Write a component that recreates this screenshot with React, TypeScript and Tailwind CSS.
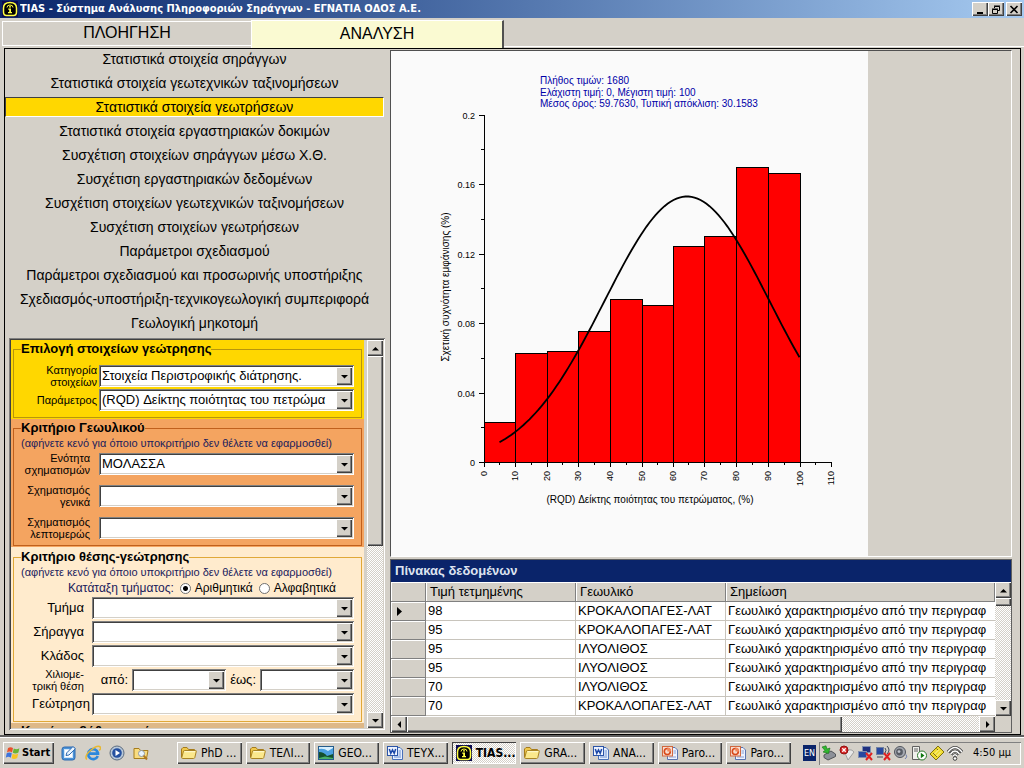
import React, { useState } from "react";

const raised =
  "bg-[#d4d0c8] shadow-[inset_1px_1px_0_#ffffff,inset_-1px_-1px_0_#404040,inset_-2px_-2px_0_#808080]";
const sunken =
  "bg-white shadow-[inset_1px_1px_0_#808080,inset_-1px_-1px_0_#ffffff,inset_2px_2px_0_#404040,inset_-2px_-2px_0_#d4d0c8]";
const dither =
  "bg-[repeating-conic-gradient(#ffffff_0_25%,#d4d0c8_0_50%)] bg-[length:2px_2px]";

const menuItems = [
  "Στατιστικά στοιχεία σηράγγων",
  "Στατιστικά στοιχεία γεωτεχνικών ταξινομήσεων",
  "Στατιστικά στοιχεία γεωτρήσεων",
  "Στατιστικά στοιχεία εργαστηριακών δοκιμών",
  "Συσχέτιση στοιχείων σηράγγων μέσω Χ.Θ.",
  "Συσχέτιση εργαστηριακών δεδομένων",
  "Συσχέτιση στοιχείων γεωτεχνικών ταξινομήσεων",
  "Συσχέτιση στοιχείων γεωτρήσεων",
  "Παράμετροι σχεδιασμού",
  "Παράμετροι σχεδιασμού και προσωρινής υποστήριξης",
  "Σχεδιασμός-υποστήριξη-τεχνικογεωλογική συμπεριφορά",
  "Γεωλογική μηκοτομή",
];

const NOTE = "(αφήνετε κενό για όποιο υποκριτήριο δεν θέλετε να εφαρμοσθεί)";

const conglomerate = "ΚΡΟΚΑΛΟΠΑΓΕΣ-ΛΑΤ";
const siltstone = "ΙΛΥΟΛΙΘΟΣ";
const rows: [string, string][] = [
  ["98", conglomerate],
  ["95", conglomerate],
  ["95", siltstone],
  ["95", siltstone],
  ["70", siltstone],
  ["70", conglomerate],
];

type Direction = "up" | "down" | "left" | "right";
const arrowPoints: Record<Direction, string> = {
  up: "0,5.5 3.5,2 7,5.5",
  down: "0,2 7,2 3.5,5.5",
  left: "5,0 5,7 1.5,3.5",
  right: "2,0 2,7 5.5,3.5",
};

function Arrow({ dir }: { dir: Direction }) {
  return (
    <svg width="7" height="7" viewBox="0 0 7 7" aria-hidden="true">
      <polygon points={arrowPoints[dir]} fill="#000" />
    </svg>
  );
}

function ScrollButton({ dir, label }: { dir: Direction; label: string }) {
  return (
    <button
      type="button"
      aria-label={label}
      className={`flex h-4 w-4 shrink-0 items-center justify-center ${raised}`}
    >
      <Arrow dir={dir} />
    </button>
  );
}

function Combo({ id, value = "", className = "" }: { id: string; value?: string; className?: string }) {
  return (
    <div className={`grid h-[22px] min-w-0 ${sunken} ${className}`}>
      <select
        id={id}
        defaultValue={value}
        className="col-start-1 row-start-1 h-[22px] w-full min-w-0 appearance-none overflow-hidden bg-transparent pr-5 pl-[3px] text-[13px] leading-[22px] text-black outline-none"
      >
        <option value={value}>{value}</option>
      </select>
      <span
        className={`pointer-events-none col-start-1 row-start-1 my-0.5 mr-0.5 flex w-4 items-center justify-center justify-self-end ${raised}`}
      >
        <Arrow dir="down" />
      </span>
    </div>
  );
}

function Group({
  title,
  tone,
  line,
  children,
}: {
  title: string;
  tone: string;
  line: string;
  children?: React.ReactNode;
}) {
  return (
    <div className={`px-0.5 pb-px ${tone}`}>
      <fieldset className={`min-w-0 border pr-[7px] pb-1.5 ${line}`}>
        <legend className="ml-[7px] text-[13px] leading-[14px] font-bold">{title}</legend>
        {children}
      </fieldset>
    </div>
  );
}

function Field({
  id,
  label,
  value,
  labelClass,
}: {
  id: string;
  label: string[];
  value?: string;
  labelClass: string;
}) {
  return (
    <div className="flex h-[22px] items-center">
      <label htmlFor={id} className={`shrink-0 text-right ${labelClass}`}>
        {label.map((part) => (
          <span key={part} className="block whitespace-nowrap">
            {part}
          </span>
        ))}
      </label>
      <Combo id={id} value={value} className="flex-1" />
    </div>
  );
}

const edges = [484, 515, 547, 578, 610, 642, 673, 704, 736, 768, 800];
const tops = [422, 353, 351, 331, 299, 305, 246, 236, 167, 173];
const xTicks = [484, 515, 547, 578, 610, 642, 673, 704, 736, 768, 800, 831];
const yTicks: [number, string][] = [
  [115, "0.2"],
  [184, "0.16"],
  [254, "0.12"],
  [323, "0.08"],
  [393, "0.04"],
  [462, "0"],
];
const curve = Array.from({ length: 101 }, (_, i) => {
  const x = 499.5 + i * 3;
  const y = 462.5 - 266 * Math.exp(-((x - 687) ** 2) / (2 * 82.6 ** 2));
  return `${x},${y.toFixed(1)}`;
}).join(" ");

function Histogram() {
  return (
    <svg
      width="477"
      height="505"
      viewBox="391 51 477 505"
      className="shrink-0 bg-[#fafafa] font-['Liberation_Sans',sans-serif]"
      role="img"
      aria-label="Ιστόγραμμα"
    >
      <g fill="#0000a8" fontSize="10">
        <text x="540" y="84">Πλήθος τιμών: 1680</text>
        <text x="540" y="96">Ελάχιστη τιμή: 0, Μέγιστη τιμή: 100</text>
        <text x="540" y="107">Μέσος όρος: 59.7630, Τυπική απόκλιση: 30.1583</text>
      </g>
      <g shapeRendering="crispEdges" stroke="#000">
        {tops.map((top, i) => (
          <rect
            key={edges[i]}
            x={edges[i] + 0.5}
            y={top + 0.5}
            width={edges[i + 1] - edges[i]}
            height={462 - top}
            fill="#ff0000"
          />
        ))}
        <path d="M484.5 115V467M479 462.5H832" fill="none" />
        {yTicks.map(([y]) => (
          <path key={y} d={`M479 ${y + 0.5}H485`} />
        ))}
        {yTicks.slice(1).map(([y]) => (
          <path key={y} d={`M481 ${y - 34.5}H485`} />
        ))}
        {xTicks.map((x) => (
          <path key={x} d={`M${x + 0.5} 462V467`} />
        ))}
        {xTicks.slice(1).map((x) => (
          <path key={x} d={`M${x - 15.5} 462V465`} />
        ))}
      </g>
      <polyline points={curve} fill="none" stroke="#000" strokeWidth="1.8" />
      <g fontSize="9" fill="#000">
        {yTicks.map(([y, label]) => (
          <text key={y} x="475" y={y + 4} textAnchor="end">
            {label}
          </text>
        ))}
        {xTicks.map((x, i) => (
          <text key={x} transform={`translate(${x + 3} 471) rotate(-90)`} textAnchor="end">
            {i * 10}
          </text>
        ))}
      </g>
      <g fontSize="10" fill="#000" textAnchor="middle">
        <text x="650" y="503">(RQD) Δείκτης ποιότητας του πετρώματος, (%)</text>
        <text transform="translate(449 287) rotate(-90)">Σχετική συχνότητα εμφάνισης (%)</text>
      </g>
    </svg>
  );
}

function TiasIcon() {
  return (
    <svg width="16" height="16" viewBox="0 0 16 16" aria-hidden="true">
      <rect width="16" height="16" fill="#0a0a50" />
      <path d="M4.5 14.5H11.5Q14.5 14.5 14.5 11V7Q14.5 1.5 8 1.5T1.5 7V11Q1.5 14.5 4.5 14.5Z" fill="#000" stroke="#ffff40" strokeWidth="1.5" />
      <path d="M5 6.5Q5 4 8 4T11 6.5" fill="none" stroke="#ffff40" />
      <path d="M7 5.2H9V6.6H7zM6.2 7.6H9V11H10V12.2H6V11H7.2V8.8H6.2z" fill="#ffff40" />
    </svg>
  );
}

function FolderIcon() {
  return (
    <svg width="16" height="16" viewBox="0 0 16 16" aria-hidden="true">
      <path d="M.5 12.5V4L2 2.5H6L7.5 4.5H13.5V7" fill="#f0c84c" stroke="#a67c1c" />
      <path d="M.8 12.5L2.5 6Q2.7 5.5 3.5 5.5H14.5Q15.5 5.5 15.3 6.3L13.8 12.6Q13.5 13.5 12.5 13.5H1.6Q.6 13.5 .8 12.5Z" fill="#fbe88c" stroke="#a98424" />
      <path d="M3.6 6.7H14" stroke="#fffbd8" />
    </svg>
  );
}

function WordIcon() {
  return (
    <svg width="16" height="16" viewBox="0 0 16 16" aria-hidden="true">
      <path d="M5.5 2.5H13L15.5 5V14.5H5.5Z" fill="#e6efff" stroke="#4870b8" />
      <path d="M11.5 6H14M11.5 8H14M11.5 10H14M7 12H14" stroke="#6a8fd0" />
      <rect x=".5" y="1.5" width="10" height="9" fill="#eef4ff" stroke="#2c55a8" />
      <path d="M2.3 4L3.8 8.3L5.5 5L7.2 8.3L8.7 4" fill="none" stroke="#1c48a8" strokeWidth="1.5" />
    </svg>
  );
}

function SlidesIcon() {
  return (
    <svg width="16" height="16" viewBox="0 0 16 16" aria-hidden="true">
      <path d="M5.5 2.5H13L15.5 5V14.5H5.5Z" fill="#edf2ff" stroke="#5a74b0" />
      <path d="M11.5 6H14M11.5 8H14M7 12H14" stroke="#8aa0d0" />
      <rect x=".5" y="1.5" width="10" height="9.5" fill="#f8ddd0" stroke="#d06840" />
      <circle cx="5.3" cy="6.5" r="3" fill="none" stroke="#d84818" strokeWidth="1.6" />
      <path d="M5.3 6.5V2.6Q9 2.8 9.2 6.5Z" fill="#f0885c" />
    </svg>
  );
}

function ImageIcon() {
  return (
    <svg width="16" height="16" viewBox="0 0 16 16" aria-hidden="true">
      <rect x=".5" y="1.5" width="15" height="13" fill="#4aa0e0" stroke="#245c8c" />
      <path d="M1 4Q6 3 10 6L15 3V2H1Z" fill="#d8f0ff" />
      <path d="M1 14V7Q6 7 9 11L15 9V14Z" fill="#14502c" />
      <path d="M1 13L7 11.5L15 13V14H1Z" fill="#48b068" />
    </svg>
  );
}

function WindowsFlag() {
  return (
    <svg width="16" height="16" viewBox="0 0 16 16" aria-hidden="true">
      <path d="M3 3Q5.5 1.3 8 3L7 7.4Q4.5 5.8 2 7.4Z" fill="#e8502c" />
      <path d="M8.8 3.4Q11.5 5 14.4 3.2L13.4 7.6Q10.5 9.4 7.8 7.8Z" fill="#68b434" />
      <path d="M1.7 8.2Q4.3 6.7 6.8 8.2L5.8 12.7Q3.3 11 .8 12.7Z" fill="#3c74dc" />
      <path d="M7.6 8.7Q10.3 10.2 13.2 8.4L12.2 13Q9.2 14.8 6.6 13.2Z" fill="#f8c424" />
    </svg>
  );
}

const quickIcons: { name: string; art: React.ReactNode }[] = [
  {
    name: "Επιφάνεια εργασίας",
    art: (
      <>
        <rect x="1" y="2" width="13" height="13" rx="2.5" fill="#4c94d8" stroke="#2c68b0" />
        <rect x="3.5" y="4.5" width="8" height="8" fill="#fff" stroke="#d0e4f8" />
        <path d="M5 10.5L5.8 7.8L12 1.5L14.3 3.8L8 10Z" fill="#e8f4ff" stroke="#2c68b0" />
      </>
    ),
  },
  {
    name: "Internet Explorer",
    art: (
      <>
        <path d="M12.8 11A5 5 0 1 1 13 7.8V8.6H4" fill="none" stroke="#2c88dc" strokeWidth="2.6" />
        <path d="M1.8 14.5Q-1 11 5.5 5.5T14.5 1.5T14 5.5" fill="none" stroke="#e8b830" strokeWidth="1.5" />
      </>
    ),
  },
  {
    name: "Media Player",
    art: (
      <>
        <circle cx="8" cy="8" r="7" fill="#b8c8d8" stroke="#5c6c80" />
        <circle cx="8" cy="8" r="4.8" fill="#2450a0" />
        <path d="M6.5 5L11 8L6.5 11Z" fill="#fff" />
      </>
    ),
  },
  {
    name: "Αναζήτηση",
    art: (
      <>
        <path d="M1 13.5V3.5H6L7.5 5.5H15L13.5 13.5Z" fill="#f8dc80" stroke="#a67c1c" />
        <circle cx="8.5" cy="8.5" r="3" fill="#e8f4ff" stroke="#9098a0" />
        <path d="M10.7 10.7L14 14.5" stroke="#b07820" strokeWidth="2" />
      </>
    ),
  },
];

const redCross = <path d="M9 8L15 15M15 8L9 15" stroke="#e02020" strokeWidth="2" />;
const trayIcons: { name: string; art: React.ReactNode }[] = [
  {
    name: "Ασφαλής κατάργηση",
    art: (
      <>
        <path d="M3 10L10 6L14.5 9V11.5L7 15L3 12.5Z" fill="#8c9098" stroke="#505458" />
        <path d="M1 2L5 .8L6 4L9 3L7.5 8.5L2 7L4 5.5Z" fill="#30b830" stroke="#187018" strokeWidth=".6" />
      </>
    ),
  },
  {
    name: "Αποσυνδεδεμένο",
    art: (
      <>
        <path d="M6 8Q11 2 15 7L9 15Z" fill="#e8e8e8" stroke="#a0a0a0" />
        <circle cx="5" cy="5" r="4" fill="#d82828" stroke="#901010" />
        <path d="M3.3 3.3L6.7 6.7M6.7 3.3L3.3 6.7" stroke="#fff" strokeWidth="1.3" />
      </>
    ),
  },
  {
    name: "Δίκτυο",
    art: (
      <>
        <rect x="5.5" y="1.5" width="8" height="6" fill="#203080" stroke="#8090b0" />
        <rect x="1.5" y="6.5" width="8" height="6" fill="#2848a0" stroke="#8090b0" />
        {redCross}
      </>
    ),
  },
  {
    name: "Ασύρματο δίκτυο",
    art: (
      <>
        <rect x="1.5" y="2.5" width="7" height="7" fill="#2848a0" stroke="#7080a0" />
        <path d="M2 12H8M10 3Q12 5 10 8M12 1Q16 5 12 9" fill="none" stroke="#404858" />
        {redCross}
      </>
    ),
  },
  {
    name: "Ένταση",
    art: (
      <>
        <circle cx="7" cy="7" r="5.5" fill="#a4a8b0" stroke="#50545c" />
        <circle cx="6.5" cy="7" r="3.4" fill="#585c64" />
        <circle cx="6" cy="6.6" r="1.4" fill="#c0c4cc" />
        <path d="M13 9.5Q15 12 12 14" fill="none" stroke="#7080b0" />
      </>
    ),
  },
  {
    name: "Διακομιστής",
    art: (
      <>
        <path d="M1.5 1.5H8.5V14.5H1.5ZM3 4H7M3 6H7" fill="#f0f0ec" stroke="#606060" />
        <circle cx="11" cy="10.5" r="4.5" fill="#fff" stroke="#287828" />
        <path d="M9.8 7.8L13.5 10.5L9.8 13.2Z" fill="#107810" />
      </>
    ),
  },
  {
    name: "Γλώσσα",
    art: (
      <>
        <path d="M1 9L9 1L15 7L7 15Z" fill="#f0dc30" stroke="#807010" />
        <path d="M5 9.5L10 4.5M7 11.5L12 6.5" stroke="#fff8a0" />
        <path d="M4 8L8 12M7.5 3.5L9 5" stroke="#806c18" />
      </>
    ),
  },
  {
    name: "Ασύρματη σύνδεση",
    art: (
      <>
        <path d="M1 7Q8 -2 15 7M3.5 9Q8 3 12.5 9M6 11Q8 8.5 10 11" fill="none" stroke="#404040" strokeWidth="3" />
        <path d="M1 7Q8 -2 15 7M3.5 9Q8 3 12.5 9M6 11Q8 8.5 10 11" fill="none" stroke="#fff" strokeWidth="1.4" />
        <circle cx="8" cy="13.5" r="1.8" fill="#fff" stroke="#404040" />
      </>
    ),
  },
];

const tasks: { label: string; icon: React.ReactNode; active?: boolean }[] = [
  { label: "PhD ...", icon: <FolderIcon /> },
  { label: "ΤΕΛΙ...", icon: <FolderIcon /> },
  { label: "GEO...", icon: <ImageIcon /> },
  { label: "ΤΕΥΧ...", icon: <WordIcon /> },
  { label: "TIAS...", icon: <TiasIcon />, active: true },
  { label: "GRA...", icon: <FolderIcon /> },
  { label: "ANA...", icon: <WordIcon /> },
  { label: "Paro...", icon: <SlidesIcon /> },
  { label: "Paro...", icon: <SlidesIcon /> },
];

function TitleBar() {
  const control = `flex h-[14px] w-4 items-center justify-center ${raised}`;
  return (
    <header className="flex h-[18px] shrink-0 items-center bg-linear-to-r from-[#0a246a] to-[#a6caf0] pr-0.5 pl-0.5">
      <TiasIcon />
      <h1 className="ml-0.5 flex-1 truncate font-['DejaVu_Sans_Condensed','DejaVu_Sans',sans-serif] text-[11px] leading-4 font-bold text-white">
        TIAS - Σύστημα Ανάλυσης Πληροφοριών Σηράγγων - ΕΓΝΑΤΙΑ ΟΔΟΣ Α.Ε.
      </h1>
      <button type="button" aria-label="Ελαχιστοποίηση" className={control}>
        <svg width="10" height="9" viewBox="0 0 10 9"><path d="M2 7H8V9H2Z" /></svg>
      </button>
      <button type="button" aria-label="Επαναφορά" className={control}>
        <svg width="10" height="9" viewBox="0 0 10 9" fill="none" stroke="#000">
          <path d="M3.5 3V1.5H8.5V5.5H7M3 1H9M1.5 4.5H6.5V8.5H1.5ZM1 4H7" />
        </svg>
      </button>
      <button type="button" aria-label="Κλείσιμο" className={`ml-0.5 ${control}`}>
        <svg width="10" height="9" viewBox="0 0 10 9"><path d="M1.5 1L8.5 8M8.5 1L1.5 8" stroke="#000" strokeWidth="1.6" /></svg>
      </button>
    </header>
  );
}

function Filters() {
  const top = "w-[85px] pr-0.5 text-[11px] leading-3";
  const narrow = "w-[85px] pr-[9px] text-[11px] leading-3";
  const wide = "w-[78px] pr-2 text-[13px] leading-4";
  const note = "pt-px pl-[7px] text-[11px] leading-[14px] whitespace-nowrap text-[#20205c]";
  const radio = "h-[11px] w-[11px] appearance-none rounded-full border border-[#707070] bg-white";
  return (
    <div className="flex min-h-0 flex-1 gap-[3px] p-0.5 shadow-[inset_1px_1px_0_#808080,inset_-1px_-1px_0_#ffffff,inset_2px_2px_0_#404040]">
      <form className="min-w-0 flex-1 overflow-hidden">
        <Group title="Επιλογή στοιχείων γεώτρησης" tone="bg-[#ffd700] pt-0.5" line="border-[#b8960c]">
          <div className="flex flex-col gap-0.5 pt-[9px]">
            <Field id="category" label={["Κατηγορία", "στοιχείων"]} value="Στοιχεία Περιστροφικής διάτρησης." labelClass={top} />
            <Field id="parameter" label={["Παράμετρος"]} value="(RQD) Δείκτης ποιότητας του πετρώμα" labelClass={top} />
          </div>
        </Group>
        <Group title="Κριτήριο Γεωυλικού" tone="bg-[#f4a460] pt-0.5" line="border-[#c0601c]">
          <p className={note}>{NOTE}</p>
          <div className="flex flex-col gap-2.5 pt-[3px]">
            <Field id="unit" label={["Ενότητα", "σχηματισμών"]} value="ΜΟΛΑΣΣΑ" labelClass={narrow} />
            <Field id="formation" label={["Σχηματισμός", "γενικά"]} labelClass={narrow} />
            <Field id="formation-detail" label={["Σχηματισμός", "λεπτομερώς"]} labelClass={narrow} />
          </div>
        </Group>
        <Group title="Κριτήριο θέσης-γεώτρησης" tone="bg-[#ffebcd] pt-[3px]" line="border-[#e0a838]">
          <p className={note}>{NOTE}</p>
          <div className="flex h-[18px] items-center justify-end gap-1.5 pr-[18px] text-xs">
            <span className="text-[#20205c]">Κατάταξη τμήματος:</span>
            <label className="flex items-center gap-1">
              <input type="radio" name="order" defaultChecked className={`bg-[radial-gradient(circle,#000_0_2px,#fff_3px)] ${radio}`} />
              Αριθμητικά
            </label>
            <label className="flex items-center gap-1">
              <input type="radio" name="order" className={radio} />
              Αλφαβητικά
            </label>
          </div>
          <div className="flex flex-col gap-0.5">
            <Field id="section" label={["Τμήμα"]} labelClass={wide} />
            <Field id="tunnel" label={["Σήραγγα"]} labelClass={wide} />
            <Field id="branch" label={["Κλάδος"]} labelClass={wide} />
            <div className="flex h-[22px] items-center text-[13px]">
              <span className="w-[78px] shrink-0 pr-2 text-right text-[11px] leading-3">
                Χιλιομε-
                <br />
                τρική θέση
              </span>
              <label htmlFor="from" className="w-10 shrink-0 pr-1 text-right">από:</label>
              <Combo id="from" className="flex-1" />
              <label htmlFor="to" className="w-[34px] shrink-0 pr-1 text-right">έως:</label>
              <Combo id="to" className="flex-1" />
            </div>
            <Field id="borehole" label={["Γεώτρηση"]} labelClass="w-[78px] pr-0.5 text-[13px] leading-4" />
          </div>
        </Group>
        <Group title="Κριτήριο βάθους γεώτρησης" tone="bg-[#deb887] pt-px" line="border-[#a07840]" />
      </form>
      <div className={`flex w-4 shrink-0 flex-col ${dither}`}>
        <ScrollButton dir="up" label="Κύλιση φίλτρων προς τα πάνω" />
        <div className={`h-[49%] ${raised}`} />
        <div className="flex-1" />
        <ScrollButton dir="down" label="Κύλιση φίλτρων προς τα κάτω" />
      </div>
    </div>
  );
}

function DataTable() {
  const head = "h-5 border-b border-[#808080] p-0 text-left font-normal shadow-[inset_1px_1px_0_#ffffff,inset_-1px_0_0_#808080] bg-[#d4d0c8]";
  const cell = "h-[19px] truncate border-r border-b border-[#c8c4bc] p-0 pl-0.5";
  return (
    <section className="flex shrink-0 flex-col border border-[#606060]">
      <h2 className="bg-[#0a246a] pl-1 text-[13px] leading-[22px] font-bold text-[#dde3f0]">Πίνακας δεδομένων</h2>
      <div className="flex">
        <table className="min-w-0 flex-1 table-fixed border-separate border-spacing-0 bg-white text-[13px] leading-[18px]">
          <colgroup>
            <col className="w-[35px]" />
            <col className="w-[150px]" />
            <col className="w-[150px]" />
            <col />
          </colgroup>
          <thead>
            <tr>
              <th className={head} aria-label="Επιλογή" />
              <th className={head}><span className="pl-1">Τιμή τετμημένης</span></th>
              <th className={head}><span className="pl-1">Γεωυλικό</span></th>
              <th className={head}><span className="pl-1">Σημείωση</span></th>
            </tr>
          </thead>
          <tbody>
            {rows.map(([value, material], i) => (
              <tr key={i}>
                <td className="border-r border-b border-[#808080] bg-[#d4d0c8] p-0 pl-1.5 shadow-[inset_1px_1px_0_#ffffff]">
                  {i === 0 && (
                    <svg width="5" height="9" viewBox="0 0 5 9" aria-hidden="true">
                      <path d="M0 0L5 4.5L0 9Z" />
                    </svg>
                  )}
                </td>
                <td className={cell}>{value}</td>
                <td className={cell}>{material}</td>
                <td className="h-[19px] overflow-hidden border-b border-[#c8c4bc] p-0 pl-0.5 whitespace-nowrap">
                  Γεωυλικό χαρακτηρισμένο από την περιγραφ
                </td>
              </tr>
            ))}
          </tbody>
        </table>
        <div className={`flex w-4 shrink-0 flex-col ${dither}`}>
          <ScrollButton dir="up" label="Κύλιση πίνακα προς τα πάνω" />
          <div className={`h-2 ${raised}`} />
          <div className="flex-1" />
          <ScrollButton dir="down" label="Κύλιση πίνακα προς τα κάτω" />
        </div>
      </div>
      <div className="flex pr-4">
        <div className={`flex h-4 flex-1 ${dither}`}>
          <ScrollButton dir="left" label="Κύλιση πίνακα αριστερά" />
          <div className={`w-[72%] ${raised}`} />
          <div className="flex-1" />
          <ScrollButton dir="right" label="Κύλιση πίνακα δεξιά" />
        </div>
      </div>
    </section>
  );
}

function Taskbar() {
  return (
    <footer className="flex h-[33px] shrink-0 items-center border-t-2 border-[#606060] bg-[#d4d0c8] px-[3px] pt-px font-['DejaVu_Sans_Condensed','DejaVu_Sans',sans-serif] text-[11px] shadow-[inset_0_1px_0_#ffffff]">
      <button type="button" className={`flex h-[22px] w-[51px] shrink-0 items-center gap-px pl-0.5 font-bold ${raised}`}>
        <WindowsFlag />
        Start
      </button>
      <nav className="ml-[7px] flex w-[112px] shrink-0 items-center gap-2">
        {quickIcons.map(({ name, art }) => (
          <button key={name} type="button" aria-label={name} className="h-4 w-4">
            <svg width="16" height="16" viewBox="0 0 16 16">{art}</svg>
          </button>
        ))}
      </nav>
      <div className="ml-1 flex min-w-0 flex-1 gap-1">
        {tasks.map(({ label, icon, active }, i) => (
          <button
            key={i}
            type="button"
            className={`flex h-[22px] min-w-0 flex-1 items-center gap-1 overflow-hidden pl-1 text-xs whitespace-nowrap ${
              active
                ? `bg-white font-bold shadow-[inset_1px_1px_0_#404040,inset_-1px_-1px_0_#ffffff] ${dither}`
                : raised
            }`}
          >
            <span className="shrink-0">{icon}</span>
            {label}
          </button>
        ))}
      </div>
      <span className="mr-[3px] ml-3 h-4 w-[13px] shrink-0 overflow-hidden bg-[#0a246a] text-center text-[9px] leading-4 text-white">EN</span>
      <div className="flex h-[23px] shrink-0 items-center gap-0.5 pr-2.5 pl-0.5 shadow-[inset_1px_1px_0_#808080,inset_-1px_-1px_0_#ffffff]">
        {trayIcons.map(({ name, art }) => (
          <svg key={name} width="16" height="16" viewBox="0 0 16 16" role="img" aria-label={name}>
            {art}
          </svg>
        ))}
        <time className="ml-2 whitespace-nowrap">4:50 μμ</time>
      </div>
    </footer>
  );
}

export default function App() {
  const [selected, setSelected] = useState(2);
  return (
    <div className="flex h-screen flex-col overflow-hidden bg-[#d4d0c8] font-['Liberation_Sans',Arial,sans-serif] text-[13px] text-black">
      <TitleBar />
      <div role="tablist" className="flex h-[30px] shrink-0 items-end pl-0.5 text-base">
        <button type="button" role="tab" aria-selected="false" className="mb-0.5 h-[25px] w-[249px] border border-r-0 border-white pb-0.5 leading-none">
          ΠΛΟΗΓΗΣΗ
        </button>
        <button type="button" role="tab" aria-selected="true" className="h-7 w-[253px] border-t border-l border-r-2 border-t-white border-r-[#505050] border-l-white bg-[#fafad2] pb-0.5 leading-none">
          ΑΝΑΛΥΣΗ
        </button>
        <div className="mb-px flex-1 self-stretch border-b border-white" />
      </div>
      <main className="mr-[3px] ml-1 flex min-h-0 flex-1 border border-black">
        <div className="flex w-[380px] shrink-0 flex-col">
          <nav className="flex flex-col">
            {menuItems.map((item, i) => (
              <button
                key={item}
                type="button"
                onClick={() => setSelected(i)}
                className={`mr-px text-center text-sm leading-[18px] whitespace-nowrap ${
                  i === selected
                    ? "mb-1 h-5 border border-t-[#404040] border-r-white border-b-white border-l-[#404040] bg-[#ffd700]"
                    : "h-6 border-x border-transparent pb-1"
                }`}
              >
                {item}
              </button>
            ))}
          </nav>
          <div className="flex min-h-0 flex-1 pt-px pb-1 pl-1">
            <Filters />
          </div>
        </div>
        <div className="ml-[5px] flex min-w-0 flex-1 flex-col gap-0.5 pt-px pr-2 pb-px">
          <div className="flex min-h-0 flex-1 overflow-hidden border border-t-[#505050] border-r-white border-b-white border-l-[#505050]">
            <Histogram />
          </div>
          <DataTable />
        </div>
      </main>
      <Taskbar />
    </div>
  );
}
